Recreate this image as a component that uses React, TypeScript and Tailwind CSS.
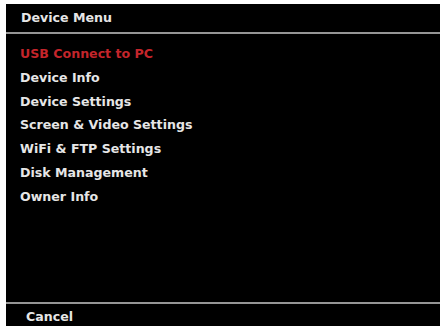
import React from "react";

const items = [
  "Device Info",
  "Device Settings",
  "Screen & Video Settings",
  "WiFi & FTP Settings",
  "Disk Management",
  "Owner Info",
];

export default function App() {
  return (
    <div className="w-[440px] h-[326px] bg-white pl-[6px] pt-[4px] overflow-hidden">
      <div
        className="w-full h-full bg-black flex flex-col text-[#e6e6e6] font-bold text-[12.6px]"
        style={{ fontFamily: '"DejaVu Sans", sans-serif' }}
      >
        <div className="h-[28px] flex items-center pl-[15px] shrink-0">Device Menu</div>
        <div className="h-[2px] bg-[#959595] shrink-0" />
        <div className="flex-1 flex flex-col pt-[9px] pl-[14px]">
          <div className="h-[23.7px] flex items-center text-[#c4252b]">USB Connect to PC</div>
          {items.map((t) => (
            <div key={t} className="h-[23.7px] flex items-center">
              {t}
            </div>
          ))}
        </div>
        <div className="h-[2px] bg-[#959595] shrink-0" />
        <div className="h-[22px] flex items-center pt-[5px] pl-[20px] shrink-0">Cancel</div>
      </div>
    </div>
  );
}
